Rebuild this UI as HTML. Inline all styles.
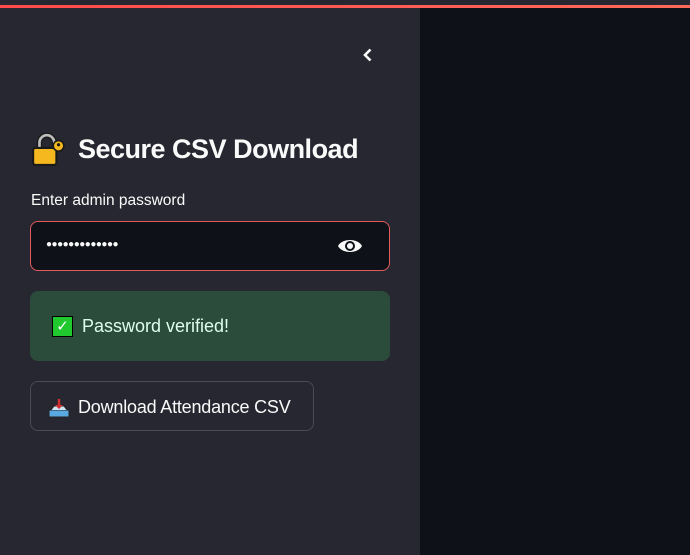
<!DOCTYPE html>
<html><head><style>
body{margin:0;width:690px;height:555px;overflow:hidden;background:#0e1117;font-family:"Liberation Sans","DejaVu Sans",sans-serif;position:relative}
.top{position:absolute;left:0;top:0;width:690px;height:5px;background:#262730}
.line{position:absolute;left:0;top:5px;width:690px;height:3px;background:linear-gradient(90deg,#ff4b4b,#ff6a5a)}
.sb{position:absolute;left:0;top:8px;width:420px;height:547px;background:#262730}
h1{position:absolute;left:31px;top:131px;margin:0;font-size:27px;font-weight:bold;color:#fafafa;letter-spacing:-0.5px;display:flex;align-items:center}
.lbl{position:absolute;left:31px;top:192px;font-size:15.5px;color:#fafafa}
.inp{position:absolute;left:30px;top:221px;width:360px;height:50px;box-sizing:border-box;border:1px solid #e25a5a;border-radius:8px;background:#0e1117}
.dots{position:absolute;left:15px;top:17px;color:#fafafa;font-size:10px;letter-spacing:-0.5px}
.eye{position:absolute;left:306px;top:14px}
.ok{position:absolute;left:30px;top:291px;width:360px;height:70px;border-radius:8px;background:#2b4b3b}
.ok span{position:absolute;left:52px;top:25px;font-size:18px;color:#dffde9}
.ck{position:absolute;left:22px;top:25px;width:21px;height:21px;background:#1fc92e;border:1px solid #000;box-sizing:border-box;color:#fff;font-size:15px;line-height:19px;text-align:center}
.btn{position:absolute;left:30px;top:381px;width:284px;height:50px;box-sizing:border-box;border:1px solid #4a4b55;border-radius:8px;background:#262730}
.btn span{position:absolute;left:47px;top:15px;font-size:18px;color:#fafafa;letter-spacing:-0.2px}
</style></head><body>
<div class="top"></div><div class="line"></div>
<div class="sb">
<svg style="position:absolute;left:360px;top:39px" width="16" height="16" viewBox="0 0 16 16"><path d="M10.5 2.5L5 8l5.5 5.5" stroke="#fafafa" stroke-width="2.6" fill="none"/></svg>
</div>
<h1><svg width="36" height="36" viewBox="0 0 34 34" style="margin-right:11px;flex:none"><path d="M8 17V11a7 7 0 0 1 14 0v3" stroke="#1a1a1a" stroke-width="5" fill="none"/><path d="M8 17V11a7 7 0 0 1 14 0v3" stroke="#bdbdbd" stroke-width="2.5" fill="none"/><rect x="2" y="16" width="22" height="16" rx="2" fill="#f6b81f" stroke="#1a1a1a" stroke-width="2"/><circle cx="26" cy="14" r="5" fill="#f6b81f" stroke="#1a1a1a" stroke-width="1.5"/><circle cx="26" cy="13" r="1.5" fill="#1a1a1a"/></svg>Secure CSV Download</h1>
<div class="lbl">Enter admin password</div>
<div class="inp"><div class="dots">●●●●●●●●●●●●●</div>
<svg class="eye" width="26" height="20" viewBox="0 0 26 20"><path d="M1 10C5 2 21 2 25 10C21 18 5 18 1 10Z" fill="#fafafa"/><circle cx="13" cy="10" r="5" fill="#0e1117"/><circle cx="13" cy="10" r="3" fill="#fafafa"/></svg></div>
<div class="ok"><div class="ck">✓</div><span>Password verified!</span></div>
<div class="btn"><svg style="position:absolute;left:17px;top:16px" width="22" height="20" viewBox="0 0 22 20"><path d="M1 12h20v7H1z" fill="#5aa8e0" stroke="#222" stroke-width="1"/><path d="M3 12l3-4h10l3 4" fill="#cde7f7" stroke="#222"/><path d="M11 1v9" stroke="#d03030" stroke-width="2.5"/><path d="M7 7l4 4 4-4" fill="#d03030"/></svg><span>Download Attendance CSV</span></div>
</body></html>
